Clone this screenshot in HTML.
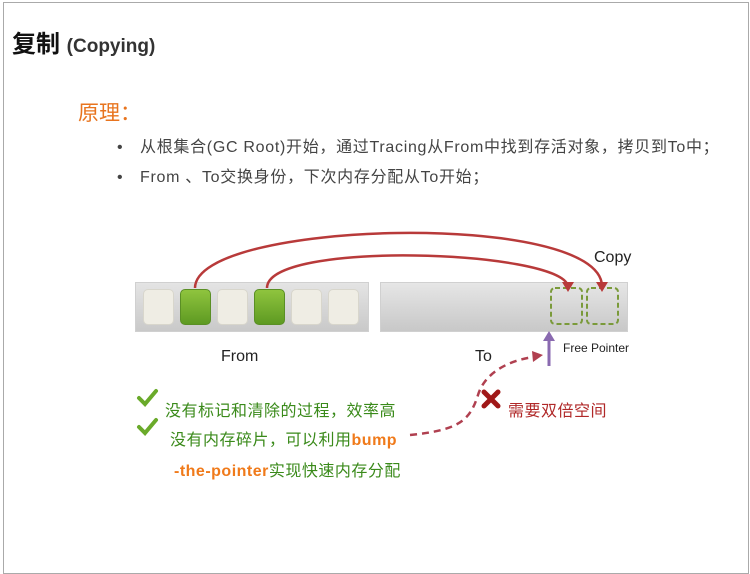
<!DOCTYPE html>
<html><head><meta charset="utf-8"><style>
body{margin:0;width:750px;height:560px;background:#fff;position:relative;overflow:hidden;font-family:"Liberation Sans","Noto Sans CJK SC",sans-serif}
.a{position:absolute;white-space:nowrap}
.bx{position:absolute;top:289px;width:29px;height:34px;border-radius:5px;background:#efede4;border:1px solid #d8d6cc}
.g{background:linear-gradient(#8fc43e,#5e9a22);border-color:#5a8f25}
</style></head><body>
<div class="a" style="left:3px;top:2px;width:744px;height:570px;border:1px solid #aaa"></div>
<div class="a" style="left:12px;top:24px;font-size:24px;font-weight:bold;color:#111">复制 <span style="font-size:19px;color:#333">(Copying)</span></div>
<div class="a" style="left:78px;top:97px;font-size:21px;color:#e8741e">原理：</div>
<div class="a" style="left:117px;top:139px;font-size:16px;color:#444">•</div>
<div class="a" style="left:117px;top:169px;font-size:16px;color:#444">•</div>
<div class="a" style="left:140px;top:133px;font-size:16px;letter-spacing:0.7px;color:#444">从根集合(GC Root)开始，通过Tracing从From中找到存活对象，拷贝到To中；</div>
<div class="a" style="left:140px;top:163px;font-size:16px;letter-spacing:0.7px;color:#444">From 、To交换身份，下次内存分配从To开始；</div>
<div class="a" style="left:135px;top:282px;width:232px;height:48px;background:linear-gradient(#e4e4e4,#c9c9c9);border:1px solid #d0d0d0"></div>
<div class="bx" style="left:143px"></div><div class="bx g" style="left:180px"></div><div class="bx" style="left:217px"></div><div class="bx g" style="left:254px"></div><div class="bx" style="left:291px"></div><div class="bx" style="left:328px"></div>
<div class="a" style="left:380px;top:282px;width:246px;height:48px;background:linear-gradient(#e6e6e6,#c8c8c8);border:1px solid #d0d0d0"></div>
<svg class="a" style="left:0;top:0" width="750" height="560">
<rect x="551" y="288" width="31" height="36" rx="4" fill="none" stroke="#7a9a3a" stroke-width="2" stroke-dasharray="5,3"/>
<rect x="587" y="288" width="31" height="36" rx="4" fill="none" stroke="#7a9a3a" stroke-width="2" stroke-dasharray="5,3"/>
<g fill="none" stroke="#b83a3a" stroke-width="2.5">
<path d="M195 288 C195 220 600 210 602 286"/>
<path d="M267 288 C267 240 560 250 568 286"/>
</g>
<path d="M596 282 L602 292 L608 282Z M562 282 L568 292 L574 282Z" fill="#b83a3a"/>
<line x1="549" y1="366" x2="549" y2="338" stroke="#8a6ab0" stroke-width="3"/>
<path d="M543 341 L549 331 L555 341Z" fill="#8a6ab0"/>
<path d="M410 435 C460 430 470 420 478 395 C485 372 510 360 534 357" fill="none" stroke="#b04050" stroke-width="2.5" stroke-dasharray="7,5"/>
<path d="M532 351 L543 355 L533 362Z" fill="#b04050"/>
<g stroke="#a01818" stroke-width="5" stroke-linecap="round"><line x1="484" y1="392" x2="498" y2="406"/><line x1="498" y1="392" x2="484" y2="406"/></g>
<g fill="none" stroke="#6aaa2a" stroke-width="4" stroke-linecap="round"><path d="M139 398 L145 404 L156 391"/><path d="M139 427 L145 433 L156 420"/></g>
</svg>
<div class="a" style="left:594px;top:249px;font-size:16px;color:#222">Copy</div>
<div class="a" style="left:221px;top:348px;font-size:16px;color:#222">From</div>
<div class="a" style="left:475px;top:348px;font-size:16px;color:#222">To</div>
<div class="a" style="left:563px;top:341px;font-size:12px;color:#222">Free Pointer</div>
<div class="a" style="left:165px;top:397px;font-size:16px;letter-spacing:0.5px;color:#3a8a1a">没有标记和清除的过程，效率高</div>
<div class="a" style="left:170px;top:426px;font-size:16px;letter-spacing:0.5px;color:#3a8a1a">没有内存碎片，可以利用<b style="color:#f07a1a">bump</b></div>
<div class="a" style="left:174px;top:457px;font-size:16px;letter-spacing:0.5px;color:#3a8a1a"><b style="color:#f07a1a">-the-pointer</b>实现快速内存分配</div>
<div class="a" style="left:508px;top:397px;font-size:16px;letter-spacing:0.5px;color:#b02828">需要双倍空间</div>
</body></html>
